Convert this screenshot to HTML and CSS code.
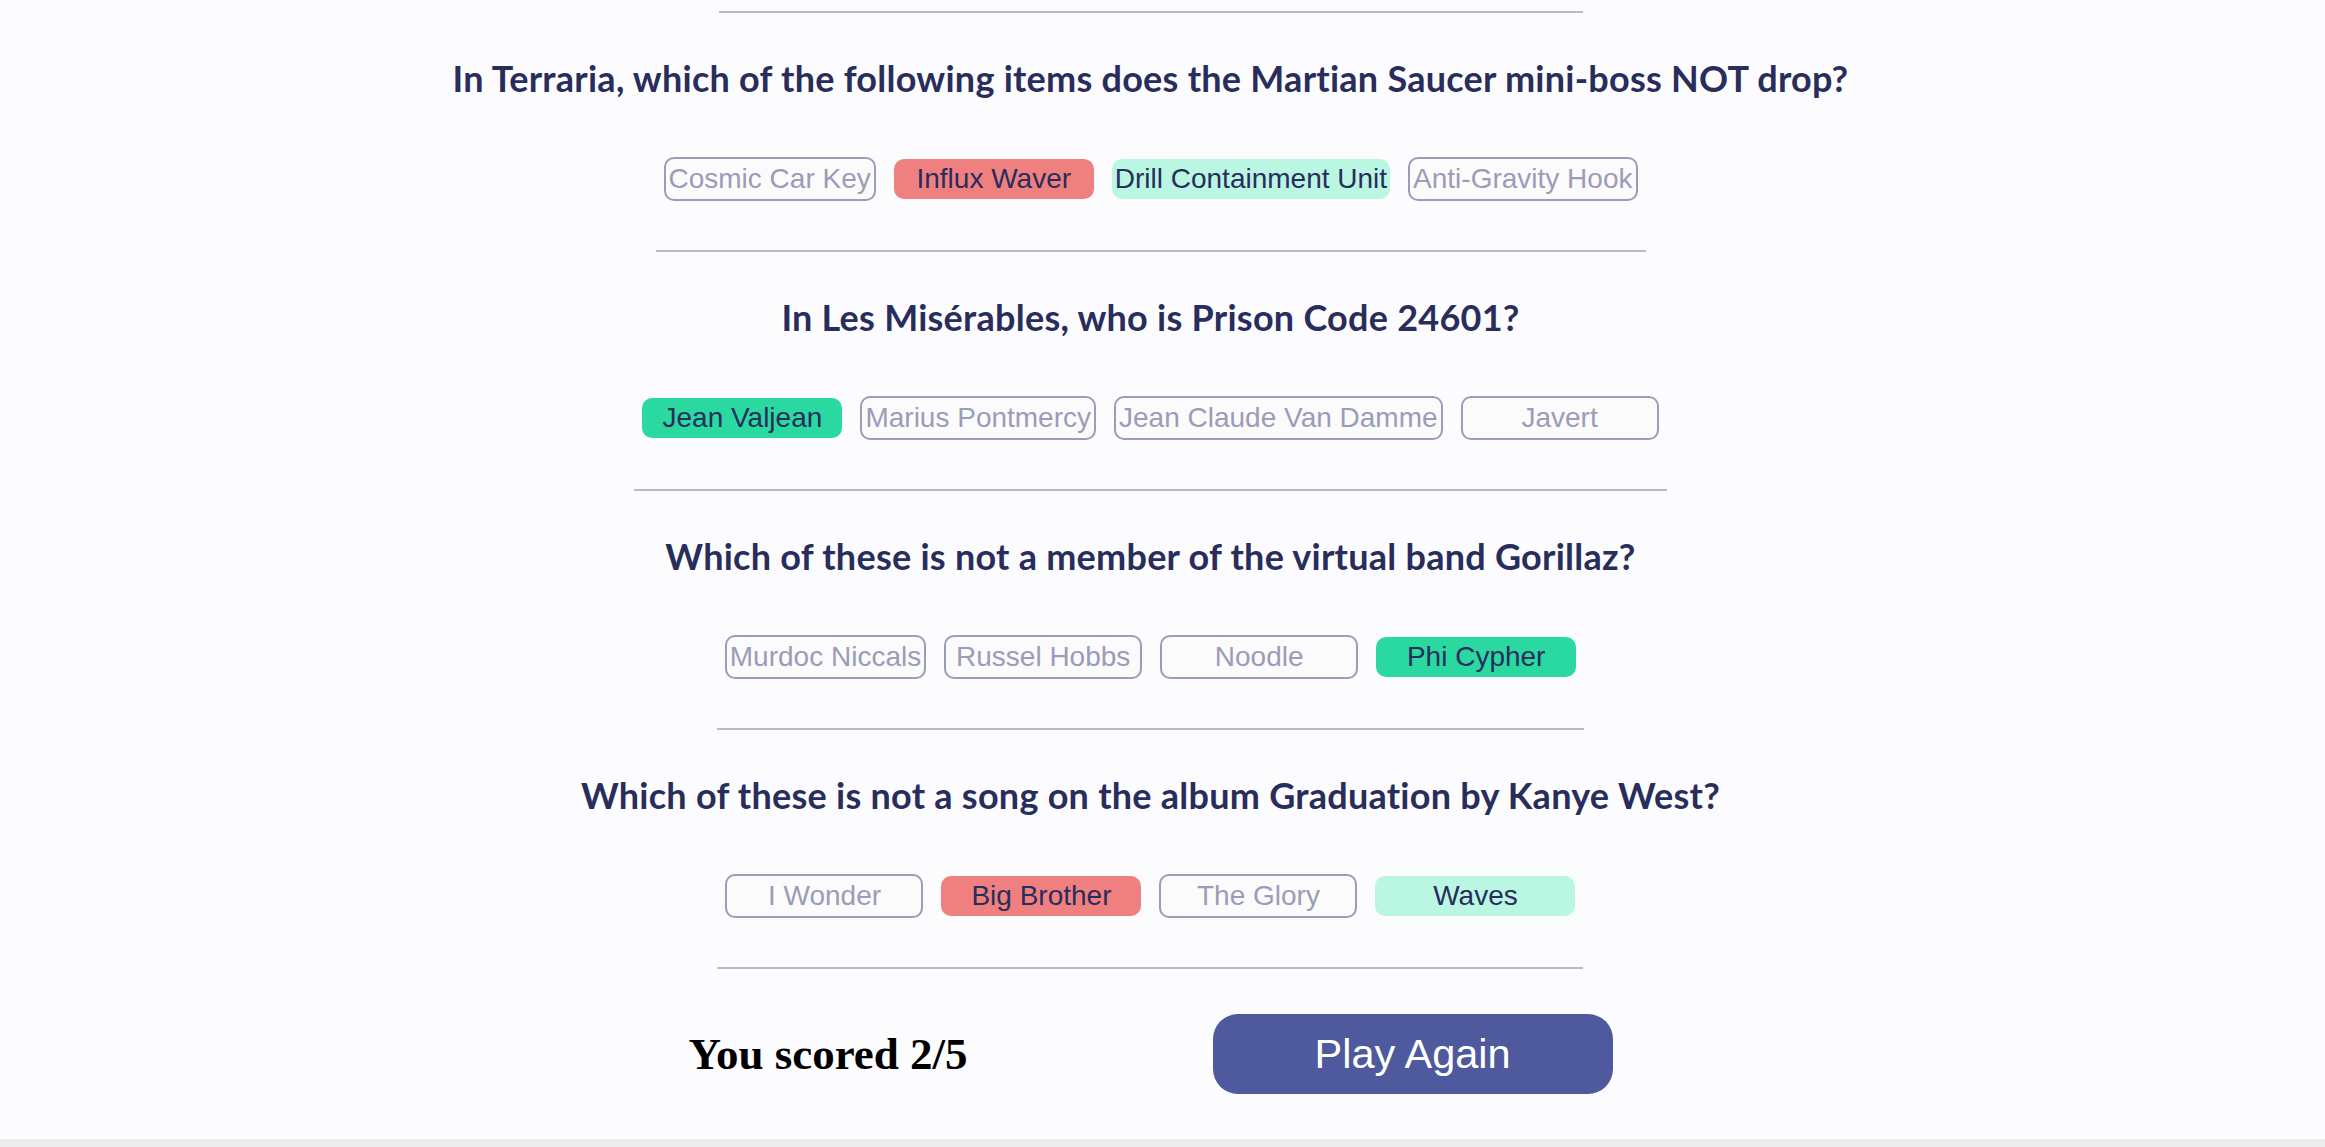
FILE: index.html
```html
<!DOCTYPE html>
<html lang="en">
<head>
<meta charset="utf-8">
<title>Quiz results</title>
<link rel="stylesheet" href="styles.css">
</head>
<body>
<main class="quiz">
  <div class="rule"></div>

  <section class="qa">
    <h2 class="question">In Terraria, which of the following items does the Martian Saucer mini-boss NOT drop?</h2>
    <div class="answers">
      <span class="answer">Cosmic Car Key</span>
      <span class="answer wrong">Influx Waver</span>
      <span class="answer correct">Drill Containment Unit</span>
      <span class="answer">Anti-Gravity Hook</span>
    </div>
  </section>

  <section class="qa">
    <h2 class="question">In Les Misérables, who is Prison Code 24601?</h2>
    <div class="answers">
      <span class="answer chosen">Jean Valjean</span>
      <span class="answer">Marius Pontmercy</span>
      <span class="answer">Jean Claude Van Damme</span>
      <span class="answer">Javert</span>
    </div>
  </section>

  <section class="qa">
    <h2 class="question">Which of these is not a member of the virtual band Gorillaz?</h2>
    <div class="answers">
      <span class="answer">Murdoc Niccals</span>
      <span class="answer">Russel Hobbs</span>
      <span class="answer">Noodle</span>
      <span class="answer chosen">Phi Cypher</span>
    </div>
  </section>

  <section class="qa">
    <h2 class="question">Which of these is not a song on the album Graduation by Kanye West?</h2>
    <div class="answers">
      <span class="answer">I Wonder</span>
      <span class="answer wrong">Big Brother</span>
      <span class="answer">The Glory</span>
      <span class="answer correct">Waves</span>
    </div>
  </section>

  <div class="result">
    <p class="score">You scored 2/5</p>
    <button class="play" type="button">Play Again</button>
  </div>
</main>
</body>
</html>
```

FILE: styles.css
```css
html {
  background: #ececec;
}

body {
  margin: 0;
  background: #ececec;
}

.quiz {
  display: flex;
  flex-direction: column;
  align-items: center;
  background: #fcfcfe;
  padding: 11px 24px 45px 0;
}

.rule {
  width: 864px;
  border-top: 2px solid #b8b9c9;
}

.qa {
  display: flex;
  flex-direction: column;
  align-items: center;
  padding-top: 45px;
}

.question {
  margin: 0;
  font-family: Lato, "Open Sans", sans-serif;
  font-weight: 700;
  font-size: 36px;
  letter-spacing: 0.25px;
  line-height: 41px;
  color: #282d5c;
  text-align: center;
  white-space: nowrap;
}

.answers {
  display: flex;
  align-items: center;
  gap: 18px;
  margin-top: 58px;
  padding: 0 8px 49px;
  border-bottom: 2px solid #b8b9c9;
}

.answer {
  box-sizing: border-box;
  display: flex;
  align-items: center;
  justify-content: center;
  min-width: 198px;
  height: 44px;
  padding: 0 3px;
  border: 2px solid #9a9cb9;
  border-radius: 10px;
  background: #fbfbfb;
  color: #9a9cb9;
  font-family: "Liberation Sans", Arial, sans-serif;
  font-size: 28px;
  white-space: nowrap;
}

.answer.wrong,
.answer.correct,
.answer.chosen {
  min-width: 200px;
  height: 40px;
  border: none;
  color: #282d5c;
}

.answer.wrong {
  background: #f08080;
}

.answer.correct {
  background: #b9f7e2;
}

.answer.chosen {
  background: #29d9a0;
}

.result {
  display: flex;
  align-items: center;
  justify-content: center;
  gap: 245px;
  padding-top: 45px;
}

.score {
  margin: 0;
  font-family: "Liberation Serif", "Times New Roman", serif;
  font-weight: 700;
  font-size: 45px;
  color: #000;
}

.play {
  width: 400px;
  height: 80px;
  border: none;
  border-radius: 25px;
  background: #4e5a9d;
  color: #fff;
  font-family: "Liberation Sans", Arial, sans-serif;
  font-size: 41.5px;
  cursor: pointer;
}
```
